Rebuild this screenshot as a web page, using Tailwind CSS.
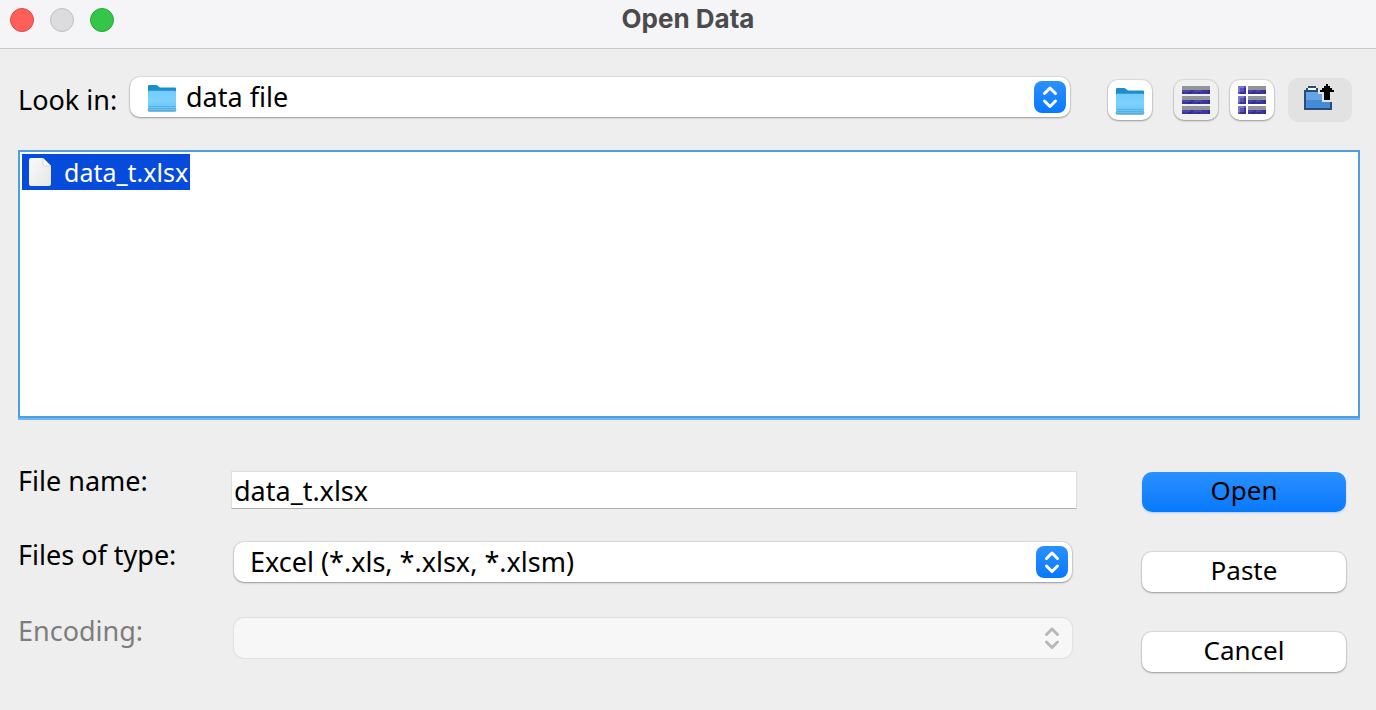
<!DOCTYPE html>
<html lang="en">
<head>
<meta charset="utf-8">
<title>Open Data</title>
<script src="https://cdn.jsdelivr.net/npm/@tailwindcss/browser@4"></script>
</head>
<body class="min-h-screen bg-[#eeeeee] font-['Noto_Sans',sans-serif] text-[27px] leading-8 text-black">
<svg class="absolute size-0" aria-hidden="true">
  <defs>
    <linearGradient id="folderFront" x1="0" y1="0" x2="0" y2="1"><stop offset="0" stop-color="#72cbfa"/><stop offset=".5" stop-color="#7dd2fc"/><stop offset="1" stop-color="#62bdf0"/></linearGradient>
    <linearGradient id="page" x1="0" y1="0" x2="1" y2="1"><stop offset="0" stop-color="#fafafa"/><stop offset="1" stop-color="#e6e6e6"/></linearGradient>
    <symbol id="folder" viewBox="0 0 32 32">
      <rect x="2" y="28" width="28" height="3" rx="1" fill="#000" opacity=".2"/>
      <path d="M2 5Q2 4 3 4H10Q11 4 12 5L14 6.500H29Q30 6.500 30 7.500V12H2Z" fill="#1b8fcd"/>
      <path d="M2 11Q2 9.800 3.500 9.800H28.500Q30 9.800 30 11V28.500Q30 30 28.500 30H3.500Q2 30 2 28.500Z" fill="url(#folderFront)"/>
      <path d="M2.500 25.500H29.500M2.500 27.500H29.500" stroke="#4fb0e6" stroke-width=".8"/>
      <path d="M2 28.500Q2 30 3.500 30H28.500Q30 30 30 28.500" fill="none" stroke="#4a9fd0"/>
    </symbol>
    <symbol id="updown" viewBox="0 0 32 32">
      <path d="M10.500 12.500L16 7L21.500 12.500M10.500 20L16 25.500L21.500 20" fill="none" stroke="currentColor" stroke-width="3" stroke-linecap="round" stroke-linejoin="round"/>
    </symbol>
    <symbol id="bar" viewBox="0 0 28 8" preserveAspectRatio="none">
      <path d="M0 0H28V4H0Z" fill="#929498"/><path d="M0 4H28V8H0Z" fill="#3a35a0"/><path d="M0 4H8V6H0ZM12 4H20V6H12Z" fill="#4a46aa"/><path d="M26 4H28V8H26ZM6 6H10V8H6ZM16 6H18V8H16Z" fill="#302b8c"/>
    </symbol>
  </defs>
</svg>

<header class="flex h-[49px] items-start border-b border-[#c9c9c9] bg-[#f5f5f7] px-[10px] pt-2">
  <div class="flex flex-1 gap-4">
    <button aria-label="Close" class="size-6 rounded-full border border-[#e2483f] bg-[#fe5f58]"></button>
    <button aria-label="Minimize" class="size-6 rounded-full border border-[#bfbfc1] bg-[#dcdcde]"></button>
    <button aria-label="Zoom" class="size-6 rounded-full border border-[#23a835] bg-[#34c648]"></button>
  </div>
  <h1 class="font-['Inter',sans-serif] text-[26px] leading-[22px] font-bold text-[#4b4b4b]">Open Data</h1>
  <div class="flex-1"></div>
</header>

<main>
  <div class="flex items-start pt-7 pr-6 pl-[18px]">
    <label for="look" class="w-28 shrink-0 pt-[7px]">Look in:</label>
    <div class="relative min-w-0 flex-1">
      <select id="look" class="block h-10 w-full appearance-none rounded-[10px] bg-white pl-14 leading-10 shadow-[0_0_1px_1px_rgba(0,0,0,0.08),0_1px_2px_rgba(0,0,0,0.3)]"><option>data file</option></select>
      <svg class="pointer-events-none absolute top-1 left-4 size-8"><use href="#folder"/></svg>
      <svg class="pointer-events-none absolute top-1 right-1 size-8 rounded-lg bg-linear-to-b from-[#2a90ff] to-[#0579ff] text-white"><use href="#updown"/></svg>
    </div>
    <div class="flex shrink-0 items-center pt-px pl-[38px]">
      <button aria-label="Home folder" class="flex h-10 w-11 items-center justify-center rounded-[10px] bg-white shadow-[0_0_1px_1px_rgba(0,0,0,0.08),0_1px_2px_rgba(0,0,0,0.3)]"><svg class="size-8"><use href="#folder"/></svg></button>
      <button aria-label="List view" class="ml-[22px] flex h-10 w-11 items-center justify-center rounded-[10px] bg-[#f0f0f0] shadow-[0_0_1px_1px_rgba(0,0,0,0.08),0_1px_2px_rgba(0,0,0,0.3)]">
        <svg class="h-7 w-7" viewBox="0 0 28 28"><use href="#bar" width="28" height="8"/><use href="#bar" y="10" width="28" height="8"/><use href="#bar" y="20" width="28" height="8"/></svg>
      </button>
      <button aria-label="Details view" class="ml-3 flex h-10 w-11 items-center justify-center rounded-[10px] bg-white shadow-[0_0_1px_1px_rgba(0,0,0,0.08),0_1px_2px_rgba(0,0,0,0.3)]">
        <svg class="h-7 w-7" viewBox="0 0 28 28"><use href="#bar" x="10" width="18" height="8"/><use href="#bar" x="10" y="10" width="18" height="8"/><use href="#bar" x="10" y="20" width="18" height="8"/><path d="M0 0H8V8H0ZM0 10H8V18H0ZM0 20H8V28H0Z" fill="#5753b4"/><path d="M0 0H6V2H2V6H0ZM0 10H6V12H2V16H0ZM0 20H6V22H2V26H0Z" fill="#7d79c4"/><path d="M6 2H8V8H2V6H6ZM6 12H8V18H2V16H6ZM6 22H8V28H2V26H6Z" fill="#38339a"/></svg>
      </button>
      <button aria-label="Up one level" class="ml-[14px] flex h-11 w-16 items-center justify-center rounded-[10px] bg-[#e2e2e2]">
        <svg class="size-8" viewBox="0 2 32 32" shape-rendering="crispEdges">
          <path d="M0 8H2V6H4V4H12V6H14V8H18V12H20V20H28V28H0Z" fill="#2c4a7c"/>
          <path d="M14 6H20V20H18V16H14Z" fill="#e2e2e2"/>
          <path d="M4 6H12V8H4Z" fill="#fff"/><path d="M2 10H14V12H18V18H2Z" fill="#65a3e3"/><path d="M2 18H18V20H26V26H2Z" fill="#428bd9"/>
          <path d="M22 2H24V4H26V6H28V8H30V10H26V18H20V10H16V8H18V6H20V4H22Z" fill="#000"/>
        </svg>
      </button>
    </div>
  </div>

  <div class="pt-7 pr-4 pl-[18px]">
    <div class="border-b-2 border-[#6ab7f7]">
      <div role="listbox" aria-label="Files" class="h-[268px] border-2 border-[#4f9fe0] bg-white p-[2px]">
        <button role="option" aria-selected="true" class="flex h-9 items-center bg-[#064bdc] pr-[2px] pl-[6px] text-white">
          <svg class="mr-3 h-7 w-6" viewBox="0 0 24 28"><path d="M1 2Q1 0 3 0H15L23 8V26Q23 28 21 28H3Q1 28 1 26Z" fill="url(#page)"/><path d="M15 0V6Q15 8 17 8H23Z" fill="#fff" stroke="#c9c9c9" stroke-width=".7"/></svg>
          <span class="text-[25px] leading-8">data_t.xlsx</span>
        </button>
      </div>
    </div>
  </div>

  <div class="flex items-start pt-[51px] pr-[30px] pb-8 pl-[18px]">
    <div class="grid min-w-0 flex-1 grid-cols-[213px_1fr] grid-rows-[71px_76px_40px] items-start">
      <label for="name" class="-mt-2 leading-9">File name:</label>
      <input id="name" value="data_t.xlsx" class="h-[38px] w-full border border-[#dedede] border-b-[#b0b0b0] bg-white px-[2px] outline-none">
      <label for="type" class="-mt-[5px] leading-9">Files of type:</label>
      <div class="relative mr-[5px] ml-[3px]">
        <select id="type" class="block h-10 w-full appearance-none rounded-[10px] bg-white pl-4 leading-10 shadow-[0_0_1px_1px_rgba(0,0,0,0.08),0_1px_2px_rgba(0,0,0,0.3)]"><option>Excel (*.xls, *.xlsx, *.xlsm)</option></select>
        <svg class="pointer-events-none absolute top-1 right-1 size-8 rounded-lg bg-linear-to-b from-[#2a90ff] to-[#0579ff] text-white"><use href="#updown"/></svg>
      </div>
      <label for="encoding" class="-mt-[5px] leading-9 text-[#7d7d7d]">Encoding:</label>
      <div class="relative mr-[5px] ml-[3px]">
        <select id="encoding" disabled class="block h-10 w-full appearance-none rounded-[10px] bg-[#f7f7f7] opacity-100 shadow-[0_0_1px_1px_rgba(0,0,0,0.06)]"></select>
        <svg class="pointer-events-none absolute top-1 right-1 size-8 text-[#b8b8b8]"><use href="#updown"/></svg>
      </div>
    </div>
    <div class="ml-[65px] flex w-[204px] shrink-0 flex-col gap-10 pt-px text-[26px]">
      <button class="h-10 rounded-[10px] bg-linear-to-b from-[#2a90ff] to-[#0579ff] pb-1 leading-9 shadow-[0_1px_2px_rgba(0,100,255,0.25)]">Open</button>
      <button class="h-10 rounded-[10px] bg-white pb-1 leading-9 shadow-[0_0_1px_1px_rgba(0,0,0,0.08),0_1px_2px_rgba(0,0,0,0.3)]">Paste</button>
      <button class="h-10 rounded-[10px] bg-white pb-1 leading-9 shadow-[0_0_1px_1px_rgba(0,0,0,0.08),0_1px_2px_rgba(0,0,0,0.3)]">Cancel</button>
    </div>
  </div>
</main>
</body>
</html>
